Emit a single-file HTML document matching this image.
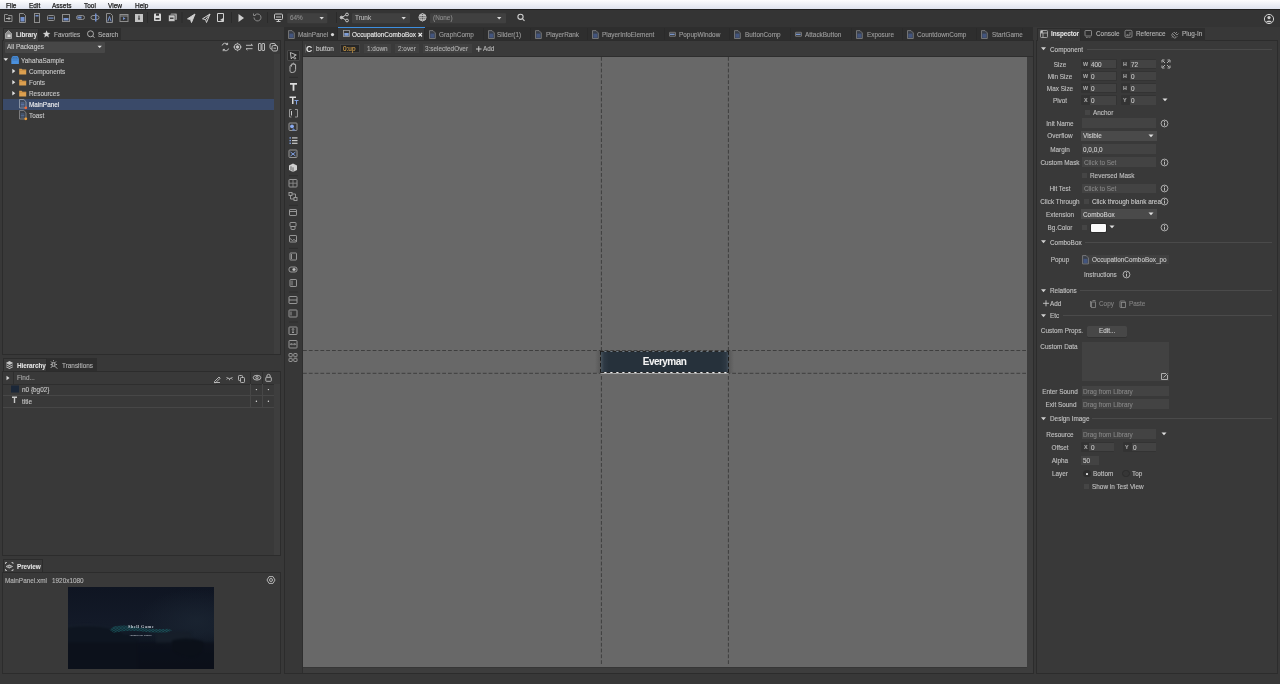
<!DOCTYPE html>
<html><head><meta charset="utf-8">
<style>
*{box-sizing:border-box;margin:0;padding:0}
html,body{width:1280px;height:684px;overflow:hidden;background:#333333;font-family:"Liberation Sans",sans-serif;font-size:7px;color:#cfcfcf}
.a{position:absolute}
#root{position:absolute;left:0;top:0;width:1280px;height:684px;will-change:transform;background:#383838}
.t{position:absolute;white-space:nowrap;line-height:9px;font-size:7.2px;-webkit-text-stroke:0.12px currentColor}
#menubar{left:0;top:0;width:1280px;height:10px;background:linear-gradient(#fdfdfe,#dfe3ee);border-bottom:0.6px solid #222}
#menubar .t{color:#1a1a1a;top:0.5px;-webkit-text-stroke:0.25px #1a1a1a;font-size:7.3px}
#toolbar{left:0;top:10px;width:1280px;height:17px;background:#343434}
.panel{position:absolute;background:#393939;border:1px solid #2c2c2c}
.tab{position:absolute;height:13px;background:#2e2e2e}
.tab.on{background:#3a3a3a;border:0.8px solid #2c2c2c;border-bottom:none}
.inp{position:absolute;background:#454545;border-radius:1px}
.dim{color:#8a8a8a}
.b{font-weight:bold}
.c{text-align:center}
#root{letter-spacing:0px}
.t{transform:scaleX(0.89);transform-origin:0 50%}
.t.c{transform-origin:50% 50%}
.t.b{letter-spacing:-0.1px;-webkit-text-stroke:0.05px currentColor}
</style></head><body><div id="root">
<div id="menubar" class="a">
 <span class="t" style="left:6px">File</span>
 <span class="t" style="left:29px">Edit</span>
 <span class="t" style="left:52px">Assets</span>
 <span class="t" style="left:84px">Tool</span>
 <span class="t" style="left:108px">View</span>
 <span class="t" style="left:135px">Help</span>
</div>
<div id="toolbar" class="a">
<svg class="a" style="left:0;top:-1px" width="540" height="17" viewBox="0 0 540 17">
<g fill="none" stroke="#8e8e8e" stroke-width="1">
 <!-- 1 folder arrow -->
 <path d="M4.5 5.5h3l1 1h3.5v6h-7.5z"/><path d="M6 9.5h4M8.5 8l1.5 1.5-1.5 1.5" stroke="#b0b0b0"/>
 <!-- 2 doc -->
 <path d="M19.5 4.5h4l2 2v7h-6z"/><rect x="20.5" y="8" width="4" height="4.5" fill="#7390cc" stroke="none"/>
 <!-- 3 tall rect -->
 <rect x="34.5" y="4.5" width="5" height="9"/><rect x="35.5" y="6" width="3" height="1.5" fill="#7390cc" stroke="none"/>
 <!-- 4 horiz bar -->
 <rect x="47.5" y="6.5" width="7" height="5" rx="1"/><rect x="48.5" y="8.5" width="5" height="1.2" fill="#7390cc" stroke="none"/>
 <!-- 5 rect lower blue -->
 <rect x="62.5" y="5.5" width="7" height="7"/><rect x="63.5" y="9" width="5" height="2.5" fill="#7390cc" stroke="none"/>
 <!-- 6 pill -->
 <rect x="76.5" y="6.5" width="8" height="4" rx="2"/><rect x="77.5" y="7.5" width="4" height="2" fill="#7390cc" stroke="none"/>
 <!-- 7 slider -->
 <rect x="91" y="6.5" width="8" height="4" rx="2"/><rect x="95" y="4.5" width="1.5" height="8" fill="#7390cc" stroke="none"/>
 <!-- 8 doc A -->
 <path d="M106.5 4.5h4l2 2v7h-6z"/><path d="M107.8 12.5l1.7-5 1.7 5" stroke="#7390cc"/>
 <!-- 9 window play -->
 <rect x="120" y="5.5" width="8" height="7"/><path d="M120 7h8"/><path d="M123 8l2.5 1.5-2.5 1.5z" fill="#7390cc" stroke="none"/>
 <!-- 10 filled folder -->
 <path d="M135 5h8v8h-8z" fill="#c4c4c4" stroke="none"/><path d="M139 6.5v4" stroke="#333"/><path d="M137.8 9.5l1.2 1.5 1.2-1.5z" fill="#333" stroke="none"/>
</g>
<path d="M147.5 3v11" stroke="#2a2a2a"/>
<g fill="none" stroke="#d0d0d0" stroke-width="1.1">
 <!-- save -->
 <rect x="154" y="4.5" width="7" height="7.5" rx="0.8" fill="#d8d8d8" stroke="none"/><rect x="156" y="4.5" width="3" height="2.2" fill="#333" stroke="none"/><rect x="155.5" y="9" width="4" height="1.6" fill="#333" stroke="none"/>
 <!-- save all -->
 <rect x="170.5" y="4.5" width="6.5" height="6.5" rx="1" fill="#9a9a9a" stroke="none"/><rect x="168.5" y="6" width="6.5" height="6.5" rx="1" fill="#c8c8c8" stroke="#333" stroke-width="0.6"/><rect x="170" y="8.5" width="3.5" height="1.5" fill="#444" stroke="none"/>
</g>
<path d="M182 3v11" stroke="#2a2a2a"/>
<g fill="#d0d0d0" stroke="#d0d0d0" stroke-width="1">
 <path d="M195 5L187.5 9.8L190.6 10.6L191.5 13.5Z"/>
 <path d="M210 5L202.5 9.8L205.6 10.6L206.5 13.5ZM210 5L205.6 10.6" fill="none"/>
 <path d="M217.5 4.5h6v8h-6z" fill="none"/><path d="M220 11l4-2.5-0.5 4z" stroke="none"/>
</g>
<path d="M231.5 3v11" stroke="#2a2a2a"/>
<path d="M238.5 5v8l5.5-4z" fill="#cfcfcf"/>
<g fill="none" stroke="#8a8a8a" stroke-width="1"><path d="M254 8.5a3.5 3.5 0 1 0 1-2.5"/><path d="M253.5 4.5v2h2"/></g>
<path d="M267.5 3v11" stroke="#2a2a2a"/>
<g fill="none" stroke="#c8c8c8" stroke-width="1"><rect x="274.5" y="5" width="8" height="5.5" rx="1"/><path d="M276 8h5M278.5 10.5v2M276.5 12.5h4"/></g>
<rect x="287.3" y="4.3" width="40" height="10" rx="1" fill="#404040"/>
<path d="M319.5 8h4.4l-2.2 2.4z" fill="#d8d8d8"/>
<path d="M336.5 3v11" stroke="#2a2a2a"/>
<g fill="none" stroke="#c8c8c8" stroke-width="1"><circle cx="341.5" cy="8.5" r="1.3" fill="#c8c8c8"/><circle cx="347" cy="5.5" r="1.4"/><circle cx="347" cy="11.5" r="1.4"/><path d="M342.5 8l3.3-2M342.5 9l3.3 2"/></g>
<rect x="352" y="4.3" width="58" height="10" rx="1" fill="#404040"/>
<path d="M401.5 8h4.4l-2.2 2.4z" fill="#d8d8d8"/>
<g fill="none" stroke="#c8c8c8" stroke-width="0.9"><circle cx="422.5" cy="8.3" r="3.6"/><ellipse cx="422.5" cy="8.3" rx="1.6" ry="3.6"/><path d="M419 8.3h7M419.5 6.5h6M419.5 10.2h6"/></g>
<rect x="430" y="4.3" width="76" height="10" rx="1" fill="#404040"/>
<path d="M497 8h4.4l-2.2 2.4z" fill="#d8d8d8"/>
<g fill="none" stroke="#d0d0d0" stroke-width="1.1"><circle cx="520.5" cy="7.8" r="2.6"/><path d="M522.5 9.8l2 2"/></g>
</svg>
<span class="t" style="left:290px;top:3.4px;color:#8e8e8e">64%</span>
<span class="t" style="left:355px;top:3.4px;color:#b8b8b8">Trunk</span>
<span class="t" style="left:433px;top:3.4px;color:#8e8e8e">(None)</span>
<svg class="a" style="left:1263px;top:3px" width="12" height="12" viewBox="0 0 12 12"><circle cx="6" cy="6" r="4.6" fill="none" stroke="#d0d0d0" stroke-width="1"/><circle cx="6" cy="4.6" r="1.6" fill="#d0d0d0"/><path d="M3 9.2c0.8-1.8 5.2-1.8 6 0" fill="#d0d0d0"/></svg>
</div>


<!-- left library panel -->
<div class="panel" style="left:2px;top:40px;width:279px;height:314.5px"></div>
<div class="tab on" style="left:2.7px;top:27.5px;width:36.3px"></div>
<div class="tab" style="left:39px;top:27.5px;width:44.7px"></div>
<div class="tab" style="left:83.7px;top:27.5px;width:37.3px"></div>
<svg class="a" style="left:0;top:27px" width="130" height="14" viewBox="0 0 130 14">
 <path d="M5.5 6.5L8.5 3.5L11.5 6.5V11.5H5.5Z" fill="#8c8c8c" stroke="#b4b4b4" stroke-width="0.8"/><rect x="7.5" y="7.5" width="3" height="2.5" fill="#d8d8d8"/>
 <path d="M46.60 3.20 L47.60 5.82 L50.40 5.96 L48.22 7.73 L48.95 10.44 L46.60 8.90 L44.25 10.44 L44.98 7.73 L42.80 5.96 L45.60 5.82Z" fill="#d0d0d0"/>
 <circle cx="90.5" cy="6.8" r="3" fill="none" stroke="#b8b8b8" stroke-width="0.9"/><path d="M92.6 8.9l1.8 1.8" stroke="#b8b8b8" stroke-width="1"/>
</svg>
<span class="t b" style="left:16.3px;top:29.5px;color:#e6e6e6">Library</span>
<span class="t" style="left:54px;top:29.5px;color:#b4b4b4">Favorties</span>
<span class="t" style="left:98px;top:29.5px;color:#b4b4b4">Search</span>
<div class="inp" style="left:5px;top:42px;width:100px;height:10.5px;background:#474747"></div>
<span class="t" style="left:6.7px;top:42.1px;color:#cccccc">All Packages</span>
<svg class="a" style="left:0;top:40px" width="280" height="80" viewBox="0 0 280 80">
 <path d="M97.5 5.8h4.4l-2.2 2.2z" fill="#e0e0e0"/>
 <g fill="none" stroke="#c8c8c8" stroke-width="0.9">
  <path d="M222.2 5.5a3 3 0 0 1 5.4-1M228.6 8.5a3 3 0 0 1-5.4 1"/><path d="M227.6 2.8v1.8h-1.8M223.2 11.2V9.4H225"/>
  <circle cx="237.5" cy="7" r="3.2"/><circle cx="237.5" cy="7" r="1.3" fill="#c8c8c8"/><path d="M237.5 2.8v0.9M237.5 10.3v0.9M233.3 7h0.9M240.8 7h0.9"/>
  <path d="M246 5.3h6.5l-1.5-1.4M252.5 8.7H246l1.5 1.4"/>
  <rect x="258.5" y="3.5" width="2.5" height="7" rx="0.5"/><rect x="262" y="3.5" width="2.5" height="7" rx="0.5"/>
  <rect x="270" y="3.5" width="5.5" height="5.5" rx="1.5"/><rect x="272" y="5.5" width="5.5" height="5.5" rx="1.5" fill="#393939"/><path d="M273.5 8.2h2.5"/>
 </g>
 <!-- tree -->
 <path d="M3.5 18.3h4.6l-2.3 2.8z" fill="#e0e0e0"/>
 <g transform="translate(0 1)"><path d="M11.3 17.2h7.6v5.8h-7.6z" fill="#4b90dc"/><path d="M11.3 17.2l1.5-2.2h4.6l1.5 2.2" fill="#4b90dc"/><path d="M13 17.2v-1h3.8v1" fill="none" stroke="#2c5f9a" stroke-width="0.6"/><rect x="12.5" y="18.6" width="5.2" height="0.8" fill="#3a74b8"/></g>
 <path d="M12.3 28.8v4.6l3-2.3z M12.3 39.9v4.6l3-2.3z M12.3 50.9v4.6l3-2.3z" fill="#e0e0e0"/>
 <path d="M19.2 28.7h2.4l0.8 0.9h3.8v4.9h-7z M19.2 39.8h2.4l0.8 0.9h3.8v4.9h-7z M19.2 50.8h2.4l0.8 0.9h3.8v4.9h-7z" fill="#dca050"/>
 <path d="M19.2 30.2h7M19.2 41.3h7M19.2 52.3h7" stroke="#b87d35" stroke-width="0.5"/>
</svg>
<div class="a" style="left:3px;top:98.7px;width:271px;height:10.9px;background:#3a4a69"></div>
<div class="a" style="left:274px;top:54px;width:6px;height:299.5px;background:#3e3e3e"></div>
<svg class="a" style="left:0;top:96px" width="40" height="26" viewBox="0 0 40 26">
 <path d="M19.5 3.5h4.3l2.2 2.2v6.3h-6.5z" fill="#3e4a60" stroke="#a8b0bc" stroke-width="0.7"/><path d="M20.8 7h3.6M20.8 8.5h3.6M20.8 10h3.6" stroke="#6a86c0" stroke-width="0.7"/><circle cx="25.8" cy="11.8" r="1.4" fill="#f06a3a"/>
 <path d="M19.5 14.5h4.3l2.2 2.2v6.3h-6.5z" fill="#3a3f48" stroke="#9a9a9a" stroke-width="0.7"/><path d="M20.8 18h3.6M20.8 19.5h3.6M20.8 21h3.6" stroke="#5a76a8" stroke-width="0.7"/><circle cx="25.8" cy="22.8" r="1.4" fill="#f0a03a"/>
</svg>
<span class="t" style="left:21px;top:55.5px;color:#c8c8c8">YahahaSample</span>
<span class="t" style="left:28.5px;top:66.8px;color:#c8c8c8">Components</span>
<span class="t" style="left:28.5px;top:77.9px;color:#c8c8c8">Fonts</span>
<span class="t" style="left:28.5px;top:88.9px;color:#c8c8c8">Resources</span>
<span class="t" style="left:28.5px;top:99.9px;color:#f2f2f2">MainPanel</span>
<span class="t" style="left:28.5px;top:110.8px;color:#c8c8c8">Toast</span>

<!-- hierarchy -->
<div class="panel" style="left:2px;top:371px;width:279px;height:184.5px"></div>
<div class="tab on" style="left:2.7px;top:358.4px;width:44.5px"></div>
<div class="tab" style="left:47.2px;top:358.4px;width:50px"></div>
<span class="t b" style="left:16.5px;top:360.5px;color:#e6e6e6">Hierarchy</span>
<span class="t" style="left:62px;top:360.5px;color:#b4b4b4">Transitions</span>
<div class="a" style="left:3px;top:383.5px;width:271px;height:0.8px;background:#2e2e2e"></div>
<div class="a" style="left:3px;top:395.2px;width:271px;height:0.8px;background:#474747"></div>
<div class="a" style="left:3px;top:407px;width:271px;height:0.8px;background:#474747"></div>
<div class="a" style="left:250.3px;top:372px;width:0.8px;height:11.5px;background:#2e2e2e"></div><div class="a" style="left:250.3px;top:384px;width:0.8px;height:23px;background:#474747"></div>
<div class="a" style="left:262.2px;top:372px;width:0.8px;height:11.5px;background:#2e2e2e"></div><div class="a" style="left:262.2px;top:384px;width:0.8px;height:23px;background:#474747"></div>
<div class="a" style="left:13px;top:372px;width:0.8px;height:11.5px;background:#2e2e2e"></div>
<div class="a" style="left:274px;top:384px;width:6px;height:170.5px;background:#3e3e3e"></div>
<span class="t" style="left:17px;top:373.0px;color:#a8a8a8">Find...</span>
<span class="t" style="left:21.5px;top:385.0px;color:#c8c8c8">n0 {bg02}</span>
<span class="t" style="left:21.5px;top:396.8px;color:#c8c8c8">title</span>
<svg class="a" style="left:0;top:355px" width="280" height="55" viewBox="0 0 280 55">
 <g fill="#c4c4c4"><path d="M5.8 8l3.7-2 3.7 2-3.7 2z"/><path d="M5.8 10l0.9-0.5 2.8 1.5 2.8-1.5 0.9 0.5-3.7 2z"/><path d="M5.8 12l0.9-0.5 2.8 1.5 2.8-1.5 0.9 0.5-3.7 2z"/></g>
 <g fill="none" stroke="#c0c0c0" stroke-width="0.85"><path d="M51 6.5l1.2 1.3h2.6l1.2-1.3M50.5 9.5h1.5M55.5 9.5h1.5M52.2 7.8v3.4h2.6V7.8M52.2 11.2l-1.5 1.8M54.8 11.2l2.5 2.5M53.5 5.2v1"/></g>
 <path d="M6.5 20.8v4.4l3-2.2z" fill="#d8d8d8"/>
 <g fill="none" stroke="#c0c0c0" stroke-width="0.9">
  <path d="M214.5 26.5l4.5-4.5 1.2 1.2-4.5 4.5h-1.2z"/><path d="M214 27.5h6"/>
  <path d="M226.5 22.5q3 2.5 6 0M227.5 23.5l-0.8 1M231.5 23.5l0.8 1M229.5 24l0 1.2"/>
  <rect x="238.5" y="20.5" width="4" height="5" rx="0.8"/><rect x="240.5" y="22.5" width="4" height="5" rx="0.8" fill="#393939"/>
  <ellipse cx="257" cy="22.7" rx="3.8" ry="2.4"/><circle cx="257" cy="22.7" r="1.2"/>
  <rect x="265.8" y="22.3" width="5.5" height="4" rx="0.6"/><path d="M266.9 22.3v-1.3a1.65 1.65 0 0 1 3.3 0v1.3"/>
 </g>
 <rect x="11" y="30.5" width="8" height="7" fill="#1b2738"/>
 <path d="M12 41.5h5v1.4h-1.8v5h-1.4v-5H12z" fill="#c8c8c8"/>
 <g fill="#e0e0e0"><circle cx="256.4" cy="34.6" r="0.7"/><circle cx="268.4" cy="34.6" r="0.7"/><circle cx="256.4" cy="46.3" r="0.7"/><circle cx="268.4" cy="46.3" r="0.7"/></g>
</svg>

<!-- preview -->
<div class="panel" style="left:2px;top:572px;width:279px;height:102px"></div>
<div class="tab on" style="left:2.7px;top:559px;width:40px"></div>
<svg class="a" style="left:0;top:559px" width="280" height="30" viewBox="0 0 280 30">
 <g fill="none" stroke="#c0c0c0" stroke-width="0.9">
  <path d="M5.5 5V3.5H7M11.5 3.5H13V5M13 10v1.5h-1.5M7 11.5H5.5V10"/>
  <path d="M6 7.5q3.3-3 6.5 0q-3.2 3-6.5 0z"/><circle cx="9.25" cy="7.5" r="1"/>
  <path d="M267 21l2-3.4h4l2 3.4-2 3.4h-4z"/><circle cx="271" cy="21" r="1.5"/>
 </g>
</svg>
<span class="t b" style="left:16.5px;top:561.5px;color:#e6e6e6">Preview</span>
<span class="t" style="left:5px;top:575.5px;color:#b8b8b8">MainPanel.xml</span>
<span class="t" style="left:52px;top:575.5px;color:#b8b8b8">1920x1080</span>
<svg class="a" style="left:68.2px;top:587px" width="146" height="82" viewBox="0 0 146 81.5" preserveAspectRatio="none">
 <defs>
  <linearGradient id="sky" x1="0" y1="0" x2="0" y2="1">
   <stop offset="0" stop-color="#0f1522"/><stop offset="0.45" stop-color="#131a28"/><stop offset="0.55" stop-color="#131b28"/><stop offset="0.7" stop-color="#0e1420"/><stop offset="1" stop-color="#0a0f18"/>
  </linearGradient>
  <radialGradient id="glow" cx="0.88" cy="0.42" r="0.4"><stop offset="0" stop-color="#1a2431" stop-opacity="0.9"/><stop offset="1" stop-color="#1a2431" stop-opacity="0"/></radialGradient>
  <filter id="bl" color-interpolation-filters="sRGB" filterUnits="userSpaceOnUse" x="-20" y="-20" width="190" height="125"><feGaussianBlur stdDeviation="1.2"/></filter>
  <filter id="bl2" color-interpolation-filters="sRGB" filterUnits="userSpaceOnUse" x="-20" y="-20" width="190" height="125"><feGaussianBlur stdDeviation="0.25"/></filter>
  <pattern id="hex" width="3.4" height="2.4" patternUnits="userSpaceOnUse"><path d="M0 1.2L1.7 0L3.4 1.2L1.7 2.4Z" fill="none" stroke="#22a09e" stroke-width="0.45"/></pattern>
 </defs>
 <rect width="146" height="81.5" fill="url(#sky)"/>
 <rect width="146" height="81.5" fill="url(#glow)"/>
 <g filter="url(#bl)">
  <path d="M-5 40 Q15 37 32 39 Q48 41 58 47 Q64 50 70 52 L70 90 L-5 90Z" fill="#0e1520"/>
  <path d="M-5 40 Q15 37 32 39 Q48 41 58 47" fill="none" stroke="#1a2330" stroke-width="1.2" opacity="0.8"/>
  <path d="M88 45.5 Q104 43.5 123 44.5 L125 56 L88 57Z" fill="#161e29"/>
  <path d="M104 53 Q120 49 135 54 Q139 64 127 69 Q110 70 104 62Z" fill="#0b111a"/>
  <rect x="-5" y="55" width="156" height="35" fill="#0b1019" opacity="0.7"/>
 </g>
 <g filter="url(#bl2)">
  <path d="M41.5 42.5 L46 39 Q60 37 72 40.5 Q88 42.5 100 41.5 L104 43 L100 45 Q86 46 72 44 Q58 42.5 46 45.5Z" fill="url(#hex)" opacity="0.75"/>
 </g>
 <text x="73" y="40.6" text-anchor="middle" font-family="Liberation Serif" font-weight="bold" font-size="4.4" fill="#c0c6cf" letter-spacing="0.45">Shell Game</text>
 <text x="72.5" y="49" text-anchor="middle" font-family="Liberation Sans" font-weight="bold" font-size="2.2" fill="#aeb4be" letter-spacing="0.1">Yahaha Hub  Games</text>
</svg>
<!-- center -->
<div class="panel" style="left:284px;top:40px;width:750px;height:634px;border-color:#2c2c2c;background:#3d3d3d"></div>
<div class="a" style="left:285px;top:40.5px;width:17.5px;height:632.5px;background:#373737;border-right:0.8px solid #2e2e2e"></div>
<div class="a" style="left:302.5px;top:40.5px;width:730.5px;height:16px;background:#3a3a3a;border-bottom:0.8px solid #2e2e2e"></div>
<div class="a" style="left:284px;top:27px;width:749px;height:13.3px;background:#2e2e2e"></div>
<div class="a" style="left:338px;top:27.3px;width:87px;height:13px;background:#383838"></div>
<div class="a" style="left:338px;top:27px;width:87px;height:1.2px;background:#3d8fe0"></div>
<svg class="a" style="left:0;top:0" width="1040" height="60" viewBox="0 0 1040 60">
<path d="M288.5 30.6h3.5l2.3 2.3v5.6h-5.8z" fill="#3a3f48" stroke="#8e8e8e" stroke-width="0.7"/><rect x="289.4" y="33.6" width="4" height="4.1" fill="#43557e"/>
<path d="M337.5 28v12" stroke="#2a2a2a" stroke-width="1"/>
<rect x="343.5" y="30.5" width="6" height="6" fill="none" stroke="#a0a0a0" stroke-width="0.8"/><rect x="344.3" y="33" width="4.4" height="2.8" fill="#7f9fd8"/>
<path d="M424.5 28v12" stroke="#2a2a2a" stroke-width="1"/>
<path d="M429.5 30.6h3.5l2.3 2.3v5.6h-5.8z" fill="#3a3f48" stroke="#8e8e8e" stroke-width="0.7"/><rect x="430.4" y="33.6" width="4" height="4.1" fill="#43557e"/>
<path d="M483.5 28v12" stroke="#2a2a2a" stroke-width="1"/>
<path d="M488.5 30.6h3.5l2.3 2.3v5.6h-5.8z" fill="#3a3f48" stroke="#8e8e8e" stroke-width="0.7"/><rect x="489.4" y="33.6" width="4" height="4.1" fill="#43557e"/>
<path d="M530.5 28v12" stroke="#2a2a2a" stroke-width="1"/>
<path d="M535.5 30.6h3.5l2.3 2.3v5.6h-5.8z" fill="#3a3f48" stroke="#8e8e8e" stroke-width="0.7"/><rect x="536.4" y="33.6" width="4" height="4.1" fill="#43557e"/>
<path d="M587.5 28v12" stroke="#2a2a2a" stroke-width="1"/>
<path d="M592.5 30.6h3.5l2.3 2.3v5.6h-5.8z" fill="#3a3f48" stroke="#8e8e8e" stroke-width="0.7"/><rect x="593.4" y="33.6" width="4" height="4.1" fill="#43557e"/>
<path d="M664.5 28v12" stroke="#2a2a2a" stroke-width="1"/>
<rect x="669.5" y="32.3" width="6" height="4" rx="0.3" fill="#3a3a3a" stroke="#8e8e8e" stroke-width="0.7"/><rect x="670.0" y="33.7" width="4.6" height="1.2" fill="#7f9fdc"/>
<path d="M729.5 28v12" stroke="#2a2a2a" stroke-width="1"/>
<path d="M734.5 30.6h3.5l2.3 2.3v5.6h-5.8z" fill="#3a3f48" stroke="#8e8e8e" stroke-width="0.7"/><rect x="735.4" y="33.6" width="4" height="4.1" fill="#43557e"/>
<path d="M790.5 28v12" stroke="#2a2a2a" stroke-width="1"/>
<rect x="795.5" y="32.3" width="6" height="4" rx="0.3" fill="#3a3a3a" stroke="#8e8e8e" stroke-width="0.7"/><rect x="796.0" y="33.7" width="4.6" height="1.2" fill="#7f9fdc"/>
<path d="M851.5 28v12" stroke="#2a2a2a" stroke-width="1"/>
<path d="M856.5 30.6h3.5l2.3 2.3v5.6h-5.8z" fill="#3a3f48" stroke="#8e8e8e" stroke-width="0.7"/><rect x="857.4" y="33.6" width="4" height="4.1" fill="#43557e"/>
<path d="M902.5 28v12" stroke="#2a2a2a" stroke-width="1"/>
<path d="M907.5 30.6h3.5l2.3 2.3v5.6h-5.8z" fill="#3a3f48" stroke="#8e8e8e" stroke-width="0.7"/><rect x="908.4" y="33.6" width="4" height="4.1" fill="#43557e"/>
<path d="M976.5 28v12" stroke="#2a2a2a" stroke-width="1"/>
<path d="M981.5 30.6h3.5l2.3 2.3v5.6h-5.8z" fill="#3a3f48" stroke="#8e8e8e" stroke-width="0.7"/><rect x="982.4" y="33.6" width="4" height="4.1" fill="#43557e"/>
<path d="M1022.5 28v12" stroke="#2a2a2a" stroke-width="1"/>
<circle cx="332.5" cy="34.6" r="1.6" fill="#d8d8d8"/>
<path d="M418.5 33l3.5 3.5M422 33l-3.5 3.5" stroke="#f0f0f0" stroke-width="1.1"/>
</svg>
<span class="t" style="left:298px;top:30.3px;color:#9e9e9e">MainPanel</span>
<span class="t" style="left:352px;top:30.3px;color:#ececec">OccupationComboBox</span>
<span class="t" style="left:439px;top:30.3px;color:#9e9e9e">GraphComp</span>
<span class="t" style="left:497px;top:30.3px;color:#9e9e9e">Slider(1)</span>
<span class="t" style="left:545.5px;top:30.3px;color:#9e9e9e">PlayerRank</span>
<span class="t" style="left:602px;top:30.3px;color:#9e9e9e">PlayerInfoElement</span>
<span class="t" style="left:679px;top:30.3px;color:#9e9e9e">PopupWindow</span>
<span class="t" style="left:745px;top:30.3px;color:#9e9e9e">ButtonComp</span>
<span class="t" style="left:805px;top:30.3px;color:#9e9e9e">AttackButton</span>
<span class="t" style="left:866.5px;top:30.3px;color:#9e9e9e">Exposure</span>
<span class="t" style="left:917px;top:30.3px;color:#9e9e9e">CountdownComp</span>
<span class="t" style="left:992px;top:30.3px;color:#9e9e9e">StartGame</span>
<!-- sub toolbar -->
<div class="a" style="left:304.6px;top:44px;width:9px;height:9.4px;border-left:0.8px solid #5a5a5a;border-right:0.8px solid #4a4a4a;border-radius:1.5px"></div>
<span class="t b" style="left:305.9px;top:43.6px;color:#ececec;font-size:8.6px;line-height:10px;transform:none;-webkit-text-stroke:0">C</span>
<span class="t" style="left:316px;top:44.0px;color:#c8c8c8">button</span>
<div class="a" style="left:340px;top:43.8px;width:19.6px;height:9.6px;background:#262626;border:1px solid #444"></div>
<span class="t" style="left:343px;top:44.0px;color:#d6a24a">0:up</span>
<div class="a" style="left:363.9px;top:44px;width:27px;height:9.4px;background:#414141"></div>
<span class="t" style="left:367px;top:44.0px;color:#b0b0b0">1:down</span>
<div class="a" style="left:395px;top:44px;width:24px;height:9.4px;background:#414141"></div>
<span class="t" style="left:397.5px;top:44.0px;color:#b0b0b0">2:over</span>
<div class="a" style="left:422.8px;top:44px;width:49.2px;height:9.4px;background:#414141"></div>
<span class="t" style="left:425px;top:44.0px;color:#b0b0b0">3:selectedOver</span>
<svg class="a" style="left:475px;top:44px" width="8" height="10"><path d="M1 5h5.5M3.75 2.2v5.6" stroke="#c8c8c8" stroke-width="1"/></svg>
<span class="t" style="left:483px;top:44.3px;color:#b8b8b8">Add</span>
<!-- left tool column -->
<div class="a" style="left:287px;top:49.5px;width:13px;height:11.3px;background:#2a2a2a;border:0.8px solid #4a4a4a;border-radius:1px"></div>
<svg class="a" style="left:284px;top:40px" width="19" height="330" viewBox="0 0 19 330">
 <g fill="none" stroke="#c4c4c4" stroke-width="0.9">
  <path d="M6.3 12.5l6 2.5-2.5 1 2 2.3-1 0.9-2-2.3-1.5 2z"/>
  <path d="M6 29.5v-3.2a0.7 0.7 0 0 1 1.4 0v-1.8a0.7 0.7 0 0 1 1.4 0v-0.6a0.7 0.7 0 0 1 1.4 0v0.9a0.7 0.7 0 0 1 1.4 0v4.7a3 3 0 0 1-3 3h-0.6a2.5 2.5 0 0 1-2-1z"/>
  <path d="M5 37.4h9" stroke="#2c2c2c"/>
 </g>
 <path d="M6 43h7v1.8h-2.6v6h-1.8v-6H6z" fill="#dcdcdc"/>
 <path d="M5.5 56.5h6.5v1.5h-2.5v6h-1.5v-6H5.5z" fill="#dcdcdc"/><path d="M10.5 60h4v1h-1.5v3.5h-1v-3.5h-1.5z" fill="#7f9fe0"/>
 <g fill="none" stroke="#a0a0a0" stroke-width="0.9">
  <path d="M7.5 69.5h-2v7.5h2M11 69.5h2.5v7.5H11"/><path d="M7.5 71v4.5" stroke="#d8d8d8"/>
  <rect x="5" y="83" width="8" height="7.5" rx="0.8"/>
  <rect x="5" y="110" width="8" height="7.5" rx="0.8"/>
 </g>
 <circle cx="8" cy="86.3" r="1.9" fill="#8aaaf0"/><path d="M9 88l3 2.5h-4z" fill="#6080c0"/>
 <g fill="#c8c8c8"><rect x="8" y="97.3" width="5.5" height="1.2"/><rect x="8" y="100" width="5.5" height="1.2"/><rect x="8" y="102.7" width="5.5" height="1.2"/></g>
 <g fill="#7f9fe0"><rect x="5.5" y="97.2" width="1.4" height="1.4"/><rect x="5.5" y="99.9" width="1.4" height="1.4"/><rect x="5.5" y="102.6" width="1.4" height="1.4"/></g>
 <path d="M6.5 112l5 4M11.5 112l-5 4" stroke="#7f9fe0" stroke-width="1"/>
 <path d="M5 125.5l4-2 4 2v4.5l-4 2-4-2z" fill="#cfcfcf"/><path d="M7 126.3v4M9 127.3v4.5" stroke="#393939" stroke-width="0.7"/>
 <path d="M5 135.7h9" stroke="#2c2c2c" stroke-width="0.9"/>
 <g fill="none" stroke="#a0a0a0" stroke-width="0.9">
  <rect x="5" y="139.5" width="8" height="7.5" rx="0.8"/><path d="M5 143.2h8M9 139.5v7.5" stroke="#8a8a8a"/>
  <rect x="5" y="152.5" width="3" height="3"/><rect x="10" y="157.5" width="3" height="3"/><path d="M6.5 155.5v3.5h3.5M8 154h3.5v3.5"/>
  <path d="M5 165.3h9" stroke="#2c2c2c"/>
  <rect x="5.5" y="169.5" width="7" height="6" rx="0.6"/><path d="M5.5 171.5h7"/>
  <rect x="6" y="182.5" width="6" height="4" rx="0.6"/><rect x="7" y="186.5" width="4" height="3" rx="0.6"/>
  <rect x="5.5" y="195.5" width="7" height="6.5" rx="0.6"/><path d="M6 198.5l2.5 2 1.5-1 2.5 2"/>
  <path d="M5 208.4h9" stroke="#2c2c2c"/>
  <rect x="6" y="213" width="6.5" height="7" rx="0.6"/><path d="M7.5 214v5"/>
  <rect x="5" y="227" width="8" height="5" rx="2"/><circle cx="10" cy="229.5" r="1.3" fill="#c8c8c8"/>
  <rect x="6" y="239.5" width="6.5" height="7" rx="0.6"/><path d="M8 240.5v5"/>
  <path d="M5 252h9" stroke="#2c2c2c"/>
  <rect x="5" y="256.5" width="8" height="7" rx="0.6"/><path d="M5 260h8"/>
  <rect x="5" y="270" width="8" height="7" rx="0.6"/><path d="M7 271.5v4"/>
  <path d="M5 282h9" stroke="#2c2c2c"/>
  <rect x="5" y="287" width="8" height="7.5" rx="0.6"/><path d="M9 288.5v4.5M8 289.5l1-1 1 1M8 292l1 1 1-1"/>
  <rect x="5" y="300.5" width="8" height="7.5" rx="0.6"/><path d="M6.5 304.2h5M7.5 303.2l-1 1 1 1M10.5 303.2l1 1-1 1"/>
  <rect x="5" y="313.5" width="3.2" height="3.2" rx="0.5"/><rect x="9.8" y="313.5" width="3.2" height="3.2" rx="0.5"/><rect x="5" y="318.3" width="3.2" height="3.2" rx="0.5"/><rect x="9.8" y="318.3" width="3.2" height="3.2" rx="0.5"/>
 </g>
</svg>
<!-- canvas -->
<div class="a" style="left:302.6px;top:57.1px;width:724.4px;height:609.6px;background:#686868"></div>
<div class="a" style="left:302.6px;top:666.7px;width:724.4px;height:1.3px;background:#363636"></div>
<svg class="a" style="left:303px;top:57px" width="724" height="609" viewBox="0 0 724 609">
 <g stroke="#3e3e3e" stroke-width="1" stroke-dasharray="3.8 2">
  <path d="M298.4 0V609M425.4 0V609"/>
  <path d="M0 293.5H724M0 316.3H724"/>
 </g>
</svg>
<div class="a" style="left:595px;top:351px;width:139px;height:22px;background:linear-gradient(90deg,rgba(104,104,104,0) 0,rgba(60,60,60,.35) 5px,rgba(60,60,60,.35) 134px,rgba(104,104,104,0) 139px)"></div>
<div class="a" style="left:600.5px;top:351px;width:128px;height:22px;background:linear-gradient(90deg,#46525c 0,#2e3944 3px,#26313b 8px,#26313b 120px,#2e3944 125px,#46525c 128px)"></div>
<svg class="a" style="left:598px;top:348px" width="134" height="28" viewBox="0 0 134 28">
 <path d="M2.5 3.5H130.5" stroke="#6f7c86" stroke-width="1"/>
 <path d="M2.5 3.5H130.5" stroke="#242424" stroke-width="1" stroke-dasharray="3.8 2.2"/>
 <path d="M2.5 24.5H130.5" stroke="#f0f0f0" stroke-width="1"/>
 <path d="M2.5 24.5H130.5" stroke="#262626" stroke-width="1" stroke-dasharray="3.8 2.2"/>
 <path d="M2.5 25.5H130.5" stroke="#dcdcdc" stroke-width="0.6"/>
 <path d="M2.5 3V25M130.5 3V25" stroke="#1c1c1c" stroke-width="1" stroke-dasharray="3.8 2.2"/>
</svg>
<span class="t b" style="left:642.8px;top:356.0px;color:#f4f4f4;font-size:10px;line-height:11px;letter-spacing:-0.55px;transform:none">Everyman</span>

<!-- inspector -->
<div class="panel" style="left:1036px;top:40px;width:242px;height:634px"></div>
<div class="tab on" style="left:1037px;top:27.5px;width:44px"></div>

<div class="tab" style="left:1081px;top:27.5px;width:40.5px"></div>
<div class="tab" style="left:1121.5px;top:27.5px;width:46.2px"></div>
<div class="tab" style="left:1167.7px;top:27.5px;width:37.8px"></div>
<svg class="a" style="left:1036px;top:27px" width="240" height="14" viewBox="0 0 240 14">
 <g fill="none" stroke="#b8b8b8" stroke-width="0.8"><rect x="4.5" y="3.5" width="7" height="7" rx="0.8"/><path d="M4.5 6h7M7 6v4.5"/></g><rect x="4.8" y="3.8" width="2" height="2" fill="#c8c8c8"/>
 <g fill="none" stroke="#9a9a9a" stroke-width="0.8"><rect x="49" y="3.5" width="6.5" height="5.5" rx="0.6"/><path d="M50 10.5h4.5" stroke-dasharray="0.8 0.6"/>
 <rect x="89" y="3.3" width="7" height="7" rx="1.2"/><path d="M94 5v3.2h-3.3"/><path d="M91.6 7.2l-1 1 1 1"/>
 <path d="M136 10.5l1.5-1.5M136.5 6.5l3 3M138 5l3 3M139.5 6.5l1.5-1.5M141 8l1.5-1.5M137.5 5.5l-1 1a2 2 0 0 0 0 3l0.8 0.8a2 2 0 0 0 3 0l1-1"/></g>
</svg>
<span class="t b" style="left:1050.7px;top:29.3px;color:#e6e6e6">Inspector</span>
<span class="t" style="left:1095.5px;top:29.3px;color:#b4b4b4">Console</span>
<span class="t" style="left:1136px;top:29.3px;color:#b4b4b4">Reference</span>
<span class="t" style="left:1182px;top:29.3px;color:#b4b4b4">Plug-In</span>
<svg class="a" style="left:1040px;top:46.2px" width="8" height="6"><path d="M1 1.3h5l-2.5 3z" fill="#d0d0d0"/></svg>
<span class="t" style="left:1049.5px;top:44.7px;color:#c4c4c4;">Component</span>
<div class="a" style="left:1087px;top:48.900000000000006px;width:185px;height:0.8px;background:#4a4a4a"></div>
<span class="t c" style="left:1019.5px;width:80px;top:59.5px;color:#c0c0c0">Size</span>
<div class="a" style="left:1081px;top:58.9px;width:35.5px;height:9.8px;background:#333333;border-radius:1px"></div><div class="a" style="left:1121px;top:58.9px;width:35px;height:9.8px;background:#333333;border-radius:1px"></div><span class="t" style="left:1082.5px;top:59.5px;color:#a8a8a8;font-size:6px;font-weight:bold">W</span>
<div class="a" style="left:1090px;top:59.7px;width:26px;height:8.6px;background:#434343"></div>
<span class="t" style="left:1091.2px;top:59.5px;color:#c8c8c8;">400</span>
<span class="t" style="left:1123.3px;top:59.5px;color:#a8a8a8;font-size:6px;font-weight:bold">H</span>
<div class="a" style="left:1130px;top:59.7px;width:25.700000000000045px;height:8.6px;background:#434343"></div>
<span class="t" style="left:1131.2px;top:59.5px;color:#c8c8c8;">72</span>
<span class="t c" style="left:1019.5px;width:80px;top:71.7px;color:#c0c0c0">Min Size</span>
<div class="a" style="left:1081px;top:71.10000000000001px;width:35.5px;height:9.8px;background:#333333;border-radius:1px"></div><div class="a" style="left:1121px;top:71.10000000000001px;width:35px;height:9.8px;background:#333333;border-radius:1px"></div><span class="t" style="left:1082.5px;top:71.7px;color:#a8a8a8;font-size:6px;font-weight:bold">W</span>
<div class="a" style="left:1090px;top:71.9px;width:26px;height:8.6px;background:#434343"></div>
<span class="t" style="left:1091.2px;top:71.7px;color:#c8c8c8;">0</span>
<span class="t" style="left:1123.3px;top:71.7px;color:#a8a8a8;font-size:6px;font-weight:bold">H</span>
<div class="a" style="left:1130px;top:71.9px;width:25.700000000000045px;height:8.6px;background:#434343"></div>
<span class="t" style="left:1131.2px;top:71.7px;color:#c8c8c8;">0</span>
<span class="t c" style="left:1019.5px;width:80px;top:83.5px;color:#c0c0c0">Max Size</span>
<div class="a" style="left:1081px;top:82.9px;width:35.5px;height:9.8px;background:#333333;border-radius:1px"></div><div class="a" style="left:1121px;top:82.9px;width:35px;height:9.8px;background:#333333;border-radius:1px"></div><span class="t" style="left:1082.5px;top:83.5px;color:#a8a8a8;font-size:6px;font-weight:bold">W</span>
<div class="a" style="left:1090px;top:83.7px;width:26px;height:8.6px;background:#434343"></div>
<span class="t" style="left:1091.2px;top:83.5px;color:#c8c8c8;">0</span>
<span class="t" style="left:1123.3px;top:83.5px;color:#a8a8a8;font-size:6px;font-weight:bold">H</span>
<div class="a" style="left:1130px;top:83.7px;width:25.700000000000045px;height:8.6px;background:#434343"></div>
<span class="t" style="left:1131.2px;top:83.5px;color:#c8c8c8;">0</span>
<span class="t c" style="left:1019.5px;width:80px;top:95.8px;color:#c0c0c0">Pivot</span>
<div class="a" style="left:1081px;top:95.2px;width:35.5px;height:9.8px;background:#333333;border-radius:1px"></div><div class="a" style="left:1121px;top:95.2px;width:35px;height:9.8px;background:#333333;border-radius:1px"></div><span class="t" style="left:1083.5px;top:95.8px;color:#a8a8a8;font-size:6px;font-weight:bold">X</span>
<div class="a" style="left:1090px;top:96.0px;width:26px;height:8.6px;background:#434343"></div>
<span class="t" style="left:1091.2px;top:95.8px;color:#c8c8c8;">0</span>
<span class="t" style="left:1123.3px;top:95.8px;color:#a8a8a8;font-size:6px;font-weight:bold">Y</span>
<div class="a" style="left:1130px;top:96.0px;width:25.700000000000045px;height:8.6px;background:#434343"></div>
<span class="t" style="left:1131.2px;top:95.8px;color:#c8c8c8;">0</span>
<svg class="a" style="left:1160.5px;top:59px" width="10" height="10"><g fill="none" stroke="#c0c0c0" stroke-width="0.9"><path d="M1 3.5V1h2.5M6.5 1H9v2.5M9 6.5V9H6.5M3.5 9H1V6.5"/><path d="M2 2l2 2M8 2L6 4M8 8L6 6M2 8l2-2"/></g></svg>
<svg class="a" style="left:1162px;top:98.3px" width="6" height="4"><path d="M0.5 0.5h5l-2.5 2.8z" fill="#e0e0e0"/></svg>
<div class="a" style="left:1085.0px;top:109.5px;width:5px;height:5px;background:#454545"></div>
<span class="t" style="left:1092.5px;top:107.5px;color:#c0c0c0;">Anchor</span>
<span class="t c" style="left:1019.5px;width:80px;top:118.7px;color:#c0c0c0">Init Name</span>
<div class="a" style="left:1082px;top:118.45px;width:74px;height:9.5px;background:#434343"></div>
<svg class="a" style="left:1160.2px;top:118.7px" width="9" height="9"><circle cx="4.5" cy="4.5" r="3.4" fill="none" stroke="#c8c8c8" stroke-width="0.8"/><path d="M4.5 3.7v3" stroke="#c8c8c8" stroke-width="0.9"/><rect x="4" y="2.2" width="1" height="0.9" fill="#c8c8c8"/></svg>
<span class="t c" style="left:1019.5px;width:80px;top:131.3px;color:#c0c0c0">Overflow</span>
<div class="a" style="left:1081.2px;top:130.9px;width:75.5px;height:9.8px;background:#4a4a4a"></div>
<span class="t" style="left:1083px;top:131.3px;color:#d0d0d0;">Visible</span>
<svg class="a" style="left:1148px;top:133.8px" width="6" height="4"><path d="M0.5 0.5h5l-2.5 2.8z" fill="#e0e0e0"/></svg>
<span class="t c" style="left:1019.5px;width:80px;top:144.5px;color:#c0c0c0">Margin</span>
<div class="a" style="left:1082px;top:144.25px;width:74px;height:9.5px;background:#434343"></div>
<span class="t" style="left:1082.5px;top:144.5px;color:#d0d0d0;">0,0,0,0</span>
<span class="t c" style="left:1019.5px;width:80px;top:157.6px;color:#c0c0c0">Custom Mask</span>
<div class="a" style="left:1082px;top:157.35px;width:74px;height:9.5px;background:#434343"></div>
<span class="t" style="left:1083.5px;top:157.6px;color:#858585;">Click to Set</span>
<svg class="a" style="left:1160.2px;top:157.6px" width="9" height="9"><circle cx="4.5" cy="4.5" r="3.4" fill="none" stroke="#c8c8c8" stroke-width="0.8"/><path d="M4.5 3.7v3" stroke="#c8c8c8" stroke-width="0.9"/><rect x="4" y="2.2" width="1" height="0.9" fill="#c8c8c8"/></svg>
<div class="a" style="left:1081.9px;top:172.8px;width:5px;height:5px;background:#454545"></div>
<span class="t" style="left:1090px;top:170.8px;color:#c0c0c0;">Reversed Mask</span>
<span class="t c" style="left:1019.5px;width:80px;top:183.9px;color:#c0c0c0">Hit Test</span>
<div class="a" style="left:1082px;top:183.65px;width:74px;height:9.5px;background:#434343"></div>
<span class="t" style="left:1083.5px;top:183.9px;color:#858585;">Click to Set</span>
<svg class="a" style="left:1160.2px;top:183.9px" width="9" height="9"><circle cx="4.5" cy="4.5" r="3.4" fill="none" stroke="#c8c8c8" stroke-width="0.8"/><path d="M4.5 3.7v3" stroke="#c8c8c8" stroke-width="0.9"/><rect x="4" y="2.2" width="1" height="0.9" fill="#c8c8c8"/></svg>
<span class="t c" style="left:1019.5px;width:80px;top:196.7px;color:#c0c0c0">Click Through</span>
<div class="a" style="left:1084.0px;top:198.7px;width:5px;height:5px;background:#454545"></div>
<span class="t" style="left:1092px;top:196.7px;color:#c8c8c8;">Click through blank area</span>
<svg class="a" style="left:1160.2px;top:196.7px" width="9" height="9"><circle cx="4.5" cy="4.5" r="3.4" fill="none" stroke="#c8c8c8" stroke-width="0.8"/><path d="M4.5 3.7v3" stroke="#c8c8c8" stroke-width="0.9"/><rect x="4" y="2.2" width="1" height="0.9" fill="#c8c8c8"/></svg>
<span class="t c" style="left:1019.5px;width:80px;top:209.7px;color:#c0c0c0">Extension</span>
<div class="a" style="left:1081.2px;top:209.29999999999998px;width:75.5px;height:9.8px;background:#4a4a4a"></div>
<span class="t" style="left:1083px;top:209.7px;color:#d0d0d0;">ComboBox</span>
<svg class="a" style="left:1148px;top:212.2px" width="6" height="4"><path d="M0.5 0.5h5l-2.5 2.8z" fill="#e0e0e0"/></svg>
<span class="t c" style="left:1019.5px;width:80px;top:222.9px;color:#c0c0c0">Bg.Color</span>
<div class="a" style="left:1081.9px;top:224.9px;width:5px;height:5px;background:#454545"></div>
<div class="a" style="left:1090.5px;top:224.4px;width:15.3px;height:7.6px;background:#fafafa;border-radius:1px;box-shadow:0 0 0 0.6px #202020"></div>
<svg class="a" style="left:1109px;top:225.4px" width="6" height="4"><path d="M0.5 0.5h5l-2.5 2.8z" fill="#e0e0e0"/></svg>
<svg class="a" style="left:1160.2px;top:222.9px" width="9" height="9"><circle cx="4.5" cy="4.5" r="3.4" fill="none" stroke="#c8c8c8" stroke-width="0.8"/><path d="M4.5 3.7v3" stroke="#c8c8c8" stroke-width="0.9"/><rect x="4" y="2.2" width="1" height="0.9" fill="#c8c8c8"/></svg>
<svg class="a" style="left:1040px;top:239.3px" width="8" height="6"><path d="M1 1.3h5l-2.5 3z" fill="#d0d0d0"/></svg>
<span class="t" style="left:1049.5px;top:237.8px;color:#c4c4c4;">ComboBox</span>
<div class="a" style="left:1085px;top:242.0px;width:187px;height:0.8px;background:#4a4a4a"></div>
<span class="t c" style="left:1019.5px;width:80px;top:255.0px;color:#c0c0c0">Popup</span>
<div class="a" style="left:1082px;top:254.85px;width:87px;height:9.3px;background:#404040"></div>
<svg class="a" style="left:1082px;top:255px" width="8" height="10"><path d="M0.6 0.6h3.5l2.3 2.3v6h-5.8z" fill="#3a3f48" stroke="#8e8e8e" stroke-width="0.7"/><rect x="1.5" y="3.8" width="4" height="4.4" fill="#43557e"/></svg>
<span class="t" style="left:1092px;top:255.0px;color:#c8c8c8;">OccupationComboBox_po</span>
<span class="t" style="left:1083.5px;top:270.2px;color:#c0c0c0;">Instructions</span>
<svg class="a" style="left:1121.5px;top:270.2px" width="9" height="9"><circle cx="4.5" cy="4.5" r="3.4" fill="none" stroke="#c8c8c8" stroke-width="0.8"/><path d="M4.5 3.7v3" stroke="#c8c8c8" stroke-width="0.9"/><rect x="4" y="2.2" width="1" height="0.9" fill="#c8c8c8"/></svg>
<svg class="a" style="left:1040px;top:287.5px" width="8" height="6"><path d="M1 1.3h5l-2.5 3z" fill="#d0d0d0"/></svg>
<span class="t" style="left:1049.5px;top:286.0px;color:#c4c4c4;">Relations</span>
<div class="a" style="left:1080px;top:290.2px;width:192px;height:0.8px;background:#4a4a4a"></div>
<svg class="a" style="left:1042px;top:299px" width="8" height="9"><path d="M1 4.3h6M4 1.3v6" stroke="#c8c8c8" stroke-width="0.9"/></svg>
<span class="t" style="left:1050px;top:298.8px;color:#c0c0c0;">Add</span>
<svg class="a" style="left:1089px;top:298.5px" width="40" height="10"><g fill="none" stroke="#8a8a8a" stroke-width="0.8"><rect x="2.5" y="3" width="4" height="5.5"/><path d="M1.5 2v6M3.5 1.5h3"/><rect x="31" y="2" width="5" height="6.5" rx="0.5"/><rect x="32.5" y="3.5" width="4" height="5" fill="#393939"/></g></svg>
<span class="t" style="left:1099px;top:298.8px;color:#808080;">Copy</span>
<span class="t" style="left:1128.5px;top:298.8px;color:#808080;">Paste</span>
<svg class="a" style="left:1040px;top:312.6px" width="8" height="6"><path d="M1 1.3h5l-2.5 3z" fill="#d0d0d0"/></svg>
<span class="t" style="left:1049.5px;top:311.1px;color:#c4c4c4;">Etc</span>
<div class="a" style="left:1063px;top:315.3px;width:209px;height:0.8px;background:#4a4a4a"></div>
<span class="t c" style="left:1021.5px;width:80px;top:326.4px;color:#c0c0c0">Custom Props.</span>
<div class="a" style="left:1087px;top:326px;width:40.4px;height:10.7px;background:#474747;border-radius:1.5px;box-shadow:0 0.5px 0 #2a2a2a"></div>
<span class="t" style="left:1099px;top:326.4px;color:#d0d0d0;">Edit...</span>
<span class="t c" style="left:1019.3px;width:80px;top:341.6px;color:#c0c0c0">Custom Data</span>
<div class="a" style="left:1081.8px;top:342.2px;width:87.20000000000005px;height:39.1px;background:#424242"></div>
<svg class="a" style="left:1159.5px;top:371.5px" width="9" height="9"><g fill="none" stroke="#c8c8c8" stroke-width="0.8"><path d="M6 1.5H1.5v6h6V3"/><path d="M3.5 5.5l4-4"/></g></svg>
<span class="t c" style="left:1019.5px;width:80px;top:386.7px;color:#c0c0c0">Enter Sound</span>
<div class="a" style="left:1081.5px;top:386.3px;width:87.0px;height:9.8px;background:#434343"></div>
<span class="t" style="left:1083px;top:386.7px;color:#858585;">Drag from Library</span>
<span class="t c" style="left:1020.5px;width:80px;top:399.7px;color:#c0c0c0">Exit Sound</span>
<div class="a" style="left:1081.5px;top:399.3px;width:87.0px;height:9.8px;background:#434343"></div>
<span class="t" style="left:1083px;top:399.7px;color:#858585;">Drag from Library</span>
<svg class="a" style="left:1040px;top:415.7px" width="8" height="6"><path d="M1 1.3h5l-2.5 3z" fill="#d0d0d0"/></svg>
<span class="t" style="left:1049.5px;top:414.2px;color:#c4c4c4;">Design Image</span>
<div class="a" style="left:1092px;top:418.4px;width:180px;height:0.8px;background:#4a4a4a"></div>
<span class="t c" style="left:1019.5px;width:80px;top:429.8px;color:#c0c0c0">Resource</span>
<div class="a" style="left:1081.5px;top:429.40000000000003px;width:74.5px;height:9.8px;background:#434343"></div>
<span class="t" style="left:1083px;top:429.8px;color:#858585;">Drag from Library</span>
<svg class="a" style="left:1160.8px;top:432.3px" width="6" height="4"><path d="M0.5 0.5h5l-2.5 2.8z" fill="#e0e0e0"/></svg>
<span class="t c" style="left:1019.5px;width:80px;top:442.6px;color:#c0c0c0">Offset</span>
<div class="a" style="left:1081px;top:442.2px;width:33px;height:9.8px;background:#333333;border-radius:1px"></div><div class="a" style="left:1123px;top:442.2px;width:33px;height:9.8px;background:#333333;border-radius:1px"></div><span class="t" style="left:1083.5px;top:442.6px;color:#a8a8a8;font-size:6px;font-weight:bold">X</span>
<div class="a" style="left:1089px;top:442.8px;width:24.799999999999955px;height:8.6px;background:#434343"></div>
<span class="t" style="left:1090.5px;top:442.6px;color:#c8c8c8;">0</span>
<span class="t" style="left:1125.3px;top:442.6px;color:#a8a8a8;font-size:6px;font-weight:bold">Y</span>
<div class="a" style="left:1131.5px;top:442.8px;width:24.5px;height:8.6px;background:#434343"></div>
<span class="t" style="left:1133px;top:442.6px;color:#c8c8c8;">0</span>
<span class="t c" style="left:1019.5px;width:80px;top:455.9px;color:#c0c0c0">Alpha</span>
<div class="a" style="left:1081px;top:456.09999999999997px;width:18.200000000000045px;height:8.6px;background:#434343"></div>
<span class="t" style="left:1082.5px;top:455.9px;color:#c8c8c8;">50</span>
<span class="t c" style="left:1019.5px;width:80px;top:469.2px;color:#c0c0c0">Layer</span>
<div class="a" style="left:1083.2px;top:469.9px;width:7.6px;height:7.6px;border-radius:50%;background:#2e2e2e"></div><div class="a" style="left:1086.1px;top:472.8px;width:1.8px;height:1.8px;background:#e6e6e6;border-radius:0.4px"></div>
<span class="t" style="left:1092.5px;top:469.2px;color:#c0c0c0;">Bottom</span>
<div class="a" style="left:1122.3px;top:469.7px;width:7.6px;height:7.6px;border:0.8px solid #2c2c2c;border-radius:50%;background:#363636"></div>
<span class="t" style="left:1132px;top:469.2px;color:#c0c0c0;">Top</span>
<div class="a" style="left:1083.9px;top:483.9px;width:5px;height:5px;background:#454545"></div>
<span class="t" style="left:1091.7px;top:481.9px;color:#c0c0c0;">Show in Test View</span>
</div></body></html>
